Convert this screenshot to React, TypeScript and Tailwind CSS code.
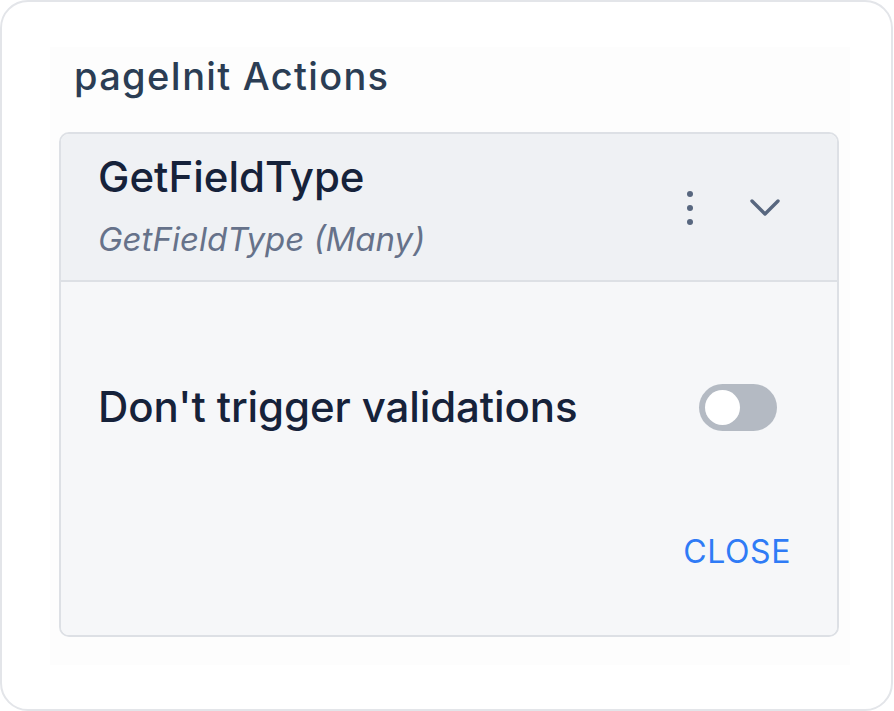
import React, { useState } from 'react';

const KebabIcon = () => (
  <svg width="8" height="36" viewBox="0 0 8 36" className="text-[#58677f]">
    <circle cx="4" cy="4" r="3" fill="currentColor" />
    <circle cx="4" cy="18" r="3" fill="currentColor" />
    <circle cx="4" cy="32" r="3" fill="currentColor" />
  </svg>
);

const ChevronIcon = () => (
  <svg width="32" height="20" viewBox="0 0 32 20" fill="none" className="text-[#58677f]">
    <path d="M3 3 L16 16 L29 3" stroke="currentColor" strokeWidth="3.4" strokeLinecap="round" strokeLinejoin="round" />
  </svg>
);

export default function App() {
  const [enabled, setEnabled] = useState(false);

  return (
    <div className="w-[894px] h-[711px] bg-white" style={{ fontFamily: 'Inter, "Noto Sans", sans-serif' }}>
      <div className="w-[893px] h-[711px] border-2 border-[#e3e5e9] rounded-[28px] bg-white pt-[45px] pl-[48px] pb-[46px]">
        <div className="h-[618px] w-[800px] bg-[#fdfdfd] pl-[9px]">
          <h2 className="pl-[15px] pt-[7px] text-[38px] leading-[44px] font-medium text-[#2b3d54] tracking-[1.3px]">pageInit Actions</h2>

          <div className="mt-[34px] w-[780px] border-2 border-[#dde0e5] rounded-[10px] overflow-hidden">
            <div className="flex items-start justify-between bg-[#eff1f4] pl-[37px] pr-[56px] pt-[18px] h-[148px] border-b-2 border-[#dde0e5]">
              <div className="flex flex-col">
                <span className="text-[42px] leading-[50px] font-medium text-[#16223a]">GetFieldType</span>
                <span className="mt-[17px] text-[33px] leading-[40px] italic text-[#66728a]">GetFieldType (Many)</span>
              </div>
              <div className="flex items-center gap-[55px] mt-[38px]">
                <button className="flex items-center justify-center">
                  <KebabIcon />
                </button>
                <button className="flex items-center justify-center">
                  <ChevronIcon />
                </button>
              </div>
            </div>

            <div className="bg-[#f6f7f9] h-[353px] flex flex-col pt-[100px]">
              <div className="flex items-center justify-between pl-[37px] pr-[60px]">
                <span className="text-[42px] leading-[50px] font-medium tracking-[-0.1px] text-[#16223a]">Don't trigger validations</span>
                <button
                  onClick={() => setEnabled(!enabled)}
                  className={`w-[78px] h-[47px] rounded-full p-[6px] flex ${enabled ? 'bg-[#2f7bf6] justify-end' : 'bg-[#b4bac3] justify-start'}`}
                >
                  <span className="w-[35px] h-[35px] rounded-full bg-white block" />
                </button>
              </div>
              <div className="flex justify-end pr-[46px] mt-[100px]">
                <button className="text-[32px] leading-[40px] text-[#2f7bf6] tracking-[0.6px]">CLOSE</button>
              </div>
            </div>
          </div>
        </div>
      </div>
    </div>
  );
}
